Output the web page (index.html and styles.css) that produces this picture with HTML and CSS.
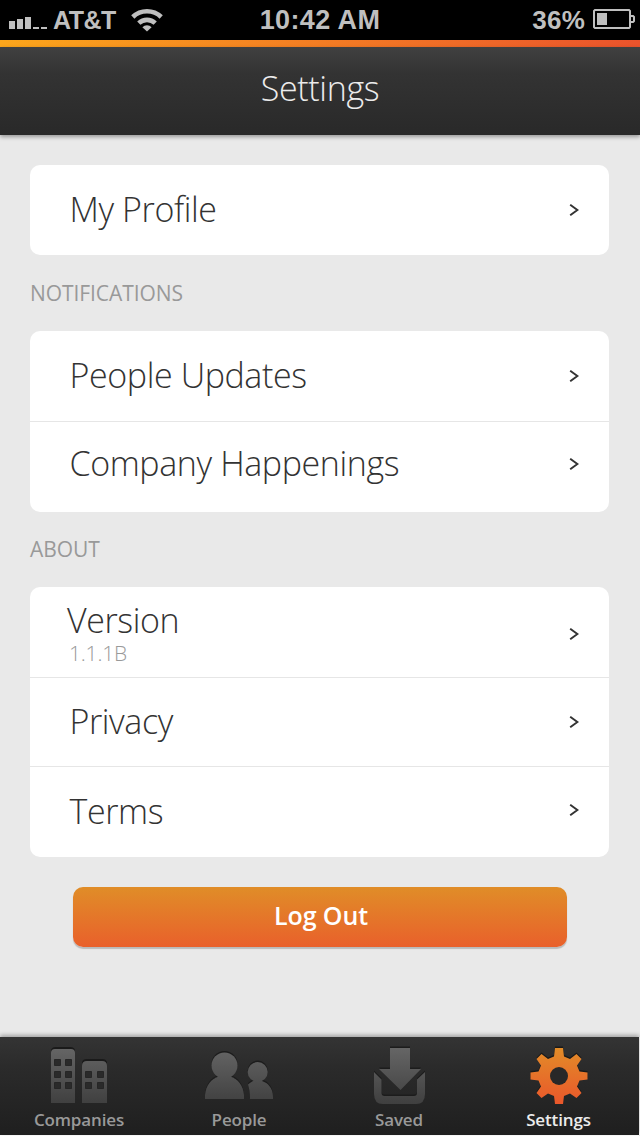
FILE: index.html
```html
<!DOCTYPE html>
<html lang="en">
<head>
<meta charset="utf-8">
<title>Settings</title>
<link rel="stylesheet" href="styles.css">
</head>
<body>
<div class="app">
  <div class="status">
    <div class="status-left">
      <svg class="signal" width="38" height="12" viewBox="0 0 38 12"><path fill="#bfbfbf" d="M0 4h6v8H0zM8 2h6v10H8zM16 0h6v12h-6zM24 10h6v2h-6zM32 10h6v2h-6z"/></svg>
      <span class="carrier">AT&amp;T</span>
      <svg class="wifi" width="32" height="24" viewBox="0 0 32 24"><g fill="none" stroke="#bfbfbf" stroke-width="4.600"><path d="M1.800 9a20.400 20.400 0 0 1 28.400 0"/><path d="M7.800 15.200a11.800 11.800 0 0 1 16.400 0"/></g><path fill="#bfbfbf" d="M11.400 19.200a6.300 6.300 0 0 1 9.200 0L16 23.600z"/></svg>
    </div>
    <span class="clock">10:42 AM</span>
    <div class="status-right">
      <span class="percent">36%</span>
      <svg class="battery" width="42" height="20" viewBox="0 0 42 20"><path fill="none" stroke="#bfbfbf" stroke-width="2" d="M2 1h34l1 1v16l-1 1H2l-1-1V2zM37 7h3l1 1v4l-1 1h-3"/><path fill="#bfbfbf" d="M4 4h10v12H4z"/></svg>
    </div>
  </div>
  <div class="stripe"></div>
  <header class="header"><h1 class="title">Settings</h1></header>
  <main class="content">
    <section class="card">
      <a class="row"><span class="label">My Profile</span><svg class="chevron" width="10" height="12" viewBox="0 0 10 12"><path d="M1.200 .8 8.400 6 1.200 11.200"/></svg></a>
    </section>
    <h2 class="heading heading-notifications">NOTIFICATIONS</h2>
    <section class="card">
      <a class="row"><span class="label">People Updates</span><svg class="chevron" width="10" height="12" viewBox="0 0 10 12"><path d="M1.200 .8 8.400 6 1.200 11.200"/></svg></a>
      <a class="row row-happenings"><span class="label">Company Happenings</span><svg class="chevron" width="10" height="12" viewBox="0 0 10 12"><path d="M1.200 .8 8.400 6 1.200 11.200"/></svg></a>
    </section>
    <h2 class="heading heading-about">ABOUT</h2>
    <section class="card">
      <a class="row row-version"><span class="stack"><span class="label">Version</span><span class="sub">1.1.1B</span></span><svg class="chevron" width="10" height="12" viewBox="0 0 10 12"><path d="M1.200 .8 8.400 6 1.200 11.200"/></svg></a>
      <a class="row row-privacy"><span class="label">Privacy</span><svg class="chevron" width="10" height="12" viewBox="0 0 10 12"><path d="M1.200 .8 8.400 6 1.200 11.200"/></svg></a>
      <a class="row row-terms"><span class="label">Terms</span><svg class="chevron" width="10" height="12" viewBox="0 0 10 12"><path d="M1.200 .8 8.400 6 1.200 11.200"/></svg></a>
    </section>
    <button class="logout">Log Out</button>
  </main>
  <nav class="tabs">
    <a class="tab">
      <svg class="icon" width="80" height="64" viewBox="0 0 80 64">
        <defs><linearGradient id="gray" gradientUnits="userSpaceOnUse" x1="0" y1="10" x2="0" y2="66"><stop offset="0" stop-color="#666"/><stop offset="1" stop-color="#404040"/></linearGradient></defs>
        <path fill="#1a1a1a" d="M12 18v-4q0-4 5-4h14q5 0 5 4v4zM43 30v-4q0-4 5-4h15q5 0 5 4v4z"/>
        <path fill="url(#gray)" d="M12 66V16q0-4 4-4h16q4 0 4 4v50zM43 66V29q0-5 5-5h15q5 0 5 5v37z"/>
        <path fill="#2a2a2a" stroke="#262626" d="M15.500 22.500h6v6h-6zM26.500 22.500h6v6h-6zM15.500 34.500h6v6h-6zM26.500 34.500h6v6h-6zM15.500 45.500h6v6h-6zM26.500 45.500h6v6h-6zM46.500 34.500h6v6h-6zM58.500 34.500h6v6h-6zM46.500 45.500h6v6h-6zM58.500 45.500h6v6h-6z"/>
      </svg>
      <span class="tab-label">Companies</span>
    </a>
    <a class="tab">
      <svg class="icon" width="80" height="64" viewBox="0 0 80 64">
        <g fill="#1c1c1c" transform="translate(0 -1.500)"><circle cx="25.500" cy="28.500" r="13"/><circle cx="58.700" cy="35" r="10"/><path d="M6 62V58C7 48 12 42 20 39.500h11C39 42 44 48 45 58v4z"/><path d="M49 47.500q2-2 5-3.500h9C69 46 74 51 74 60v2H51q0-9-2-14.500z"/></g>
        <g fill="url(#gray)"><circle cx="25.500" cy="28.500" r="13"/><circle cx="58.700" cy="35" r="10"/><path d="M6 62V58C7 48 12 42 20 39.500h11C39 42 44 48 45 58v4z"/><path d="M49 47.500q2-2 5-3.500h9C69 46 74 51 74 60v2H51q0-9-2-14.500z"/></g>
      </svg>
      <span class="tab-label">People</span>
    </a>
    <a class="tab">
      <svg class="icon" width="80" height="64" viewBox="0 0 80 64">
        <path fill="#1c1c1c" transform="translate(0 -1.500)" d="M31 11h20v21h11L41.500 53 20 32h11zM15 35l7.500 7.500V56q0 3 3 3h29.500q3 0 3-3V42.500L66 35v22q0 10-9 10H24q-9 0-9-10z"/>
        <path fill="url(#gray)" d="M31 11h20v21h11L41.500 53 20 32h11zM15 35l7.500 7.500V56q0 3 3 3h29.500q3 0 3-3V42.500L66 35v22q0 10-9 10H24q-9 0-9-10z"/>
      </svg>
      <span class="tab-label">Saved</span>
    </a>
    <a class="tab tab-active">
      <svg class="icon" width="80" height="64" viewBox="0 0 80 64">
        <defs><linearGradient id="orange" gradientUnits="userSpaceOnUse" x1="0" y1="11" x2="0" y2="67"><stop offset="0" stop-color="#e28c28"/><stop offset="1" stop-color="#ea572b"/></linearGradient></defs>
        <path transform="translate(0 -1.500)" fill="#1a1a1a" d="M36 11h8l1 8.500 6 2.500 6.500-5 5 5-4.500 6.500 2.500 6 8 1v7l-8 1-2.500 6 4.500 6.500-5 5-6.500-4.500-6 2.500-1 8h-8l-1-8-6-2.500-6.500 4.500-5-5 4.500-6.500-2.500-6-8-1v-7l8-1 2.500-6-4.500-6.500 5-5 6.500 5 6-2.500z"/>
        <path fill="url(#orange)" d="M36 11h8l1 8.500 6 2.500 6.500-5 5 5-4.500 6.500 2.500 6 8 1v7l-8 1-2.500 6 4.500 6.500-5 5-6.500-4.500-6 2.500-1 8h-8l-1-8-6-2.500-6.500 4.500-5-5 4.500-6.500-2.500-6-8-1v-7l8-1 2.500-6-4.500-6.500 5-5 6.500 5 6-2.500z"/>
        <circle cx="40" cy="39" r="9" fill="#282828"/>
      </svg>
      <span class="tab-label">Settings</span>
    </a>
  </nav>
</div>
</body>
</html>
```
FILE: styles.css
```css
* { box-sizing: border-box; }
body { margin: 0; background: #fff; font-family: "Open Sans", sans-serif; }
.app { width: 640px; height: 1136px; display: flex; flex-direction: column; background: #e9e9e9; overflow: hidden; }

.status { height: 40px; flex: none; background: #000; color: #bfbfbf; display: grid; grid-template-columns: 1fr auto 1fr; align-items: center; font: bold 25px/40px "Liberation Sans", Arial, sans-serif; }
.status-left { display: flex; align-items: center; padding-left: 9px; }
.signal { margin-top: 6px; }
.carrier { margin-left: 6px; letter-spacing: -0.5px; }
.wifi { margin-left: 15px; margin-top: -1px; }
.clock { font-size: 27px; letter-spacing: 0.4px; }
.status-right { display: flex; align-items: center; justify-content: flex-end; padding-right: 5px; }
.percent { font-size: 26px; letter-spacing: 0.2px; }
.battery { margin-left: 8px; margin-top: -2px; }

.stripe { height: 7px; flex: none; background: linear-gradient(90deg, #fca61b, #ea532c); }
.header { height: 88px; flex: none; position: relative; background: linear-gradient(#404040, #333 30%, #292929); box-shadow: 0 2px 4px rgba(0, 0, 0, .35); text-align: center; }
.title { margin: 0; padding-top: 17px; color: #ececec; font-weight: 300; font-size: 34px; line-height: 48px; letter-spacing: -0.35px; }

.content { flex: 1; padding: 30px 31px 0 30px; display: flex; flex-direction: column; }
.card { background: #fff; border-radius: 10px; }
.row { height: 90px; padding: 0 30px 0 40px; display: flex; align-items: center; justify-content: space-between; color: #333; }
.row + .row { border-top: 1px solid #e6e6e6; }
.label { margin: 0 0 3px -0.5px; font-weight: 300; font-size: 34px; line-height: 46px; letter-spacing: -0.4px; }
.chevron { fill: none; stroke: #333; stroke-width: 2; }
.row-happenings { height: 91px; padding-bottom: 6px; }
.row-happenings .label { margin-bottom: 2px; }
.row-privacy { height: 89px; }
.row-terms { height: 91px; padding-bottom: 4px; }
.row-terms .label { margin-bottom: -1px; }
.row-version { padding-top: 4px; }
.stack { display: flex; flex-direction: column; margin-left: -3px; }
.row-version .label { margin: 0; line-height: 38px; }
.sub { margin-left: 2px; font-weight: 300; font-size: 21px; line-height: 29px; letter-spacing: -0.2px; color: #999; }
.heading { margin: 0; color: #999; font-weight: 400; font-size: 21px; line-height: 30px; letter-spacing: -0.08px; }
.heading-notifications { padding: 23px 0; }
.heading-about { padding: 22px 0 23px; }
.logout { width: 494px; height: 60px; margin: 30px 0 0 43px; padding: 0 0 3px 2px; border: 0; border-radius: 10px; background: linear-gradient(#e08d28, #e9602b); box-shadow: 0 2px 1px rgba(0, 0, 0, .2); color: #fff; font: 600 25px/57px "Open Sans", sans-serif; letter-spacing: -0.1px; }

.tabs { width: 639px; height: 98px; margin-bottom: 1px; flex: none; position: relative; display: grid; grid-template-columns: 158px 160px 160px 161px; background: linear-gradient(#343434, #2b2b2b 30%, #1f1f1f); box-shadow: 0 -2px 4px rgba(0, 0, 0, .3), 0 1px 0 #fff, 1px 0 0 #fff; }
.tab { display: flex; flex-direction: column; align-items: center; color: #999; }
.tab:nth-child(2), .tab:nth-child(3) { padding-left: 2px; }
.icon { height: 64px; overflow: visible; }
.tab-label { margin-top: 7px; font-weight: 600; font-size: 17px; line-height: 24px; letter-spacing: -0.15px; }
.tab-active { color: #ececec; }
```
